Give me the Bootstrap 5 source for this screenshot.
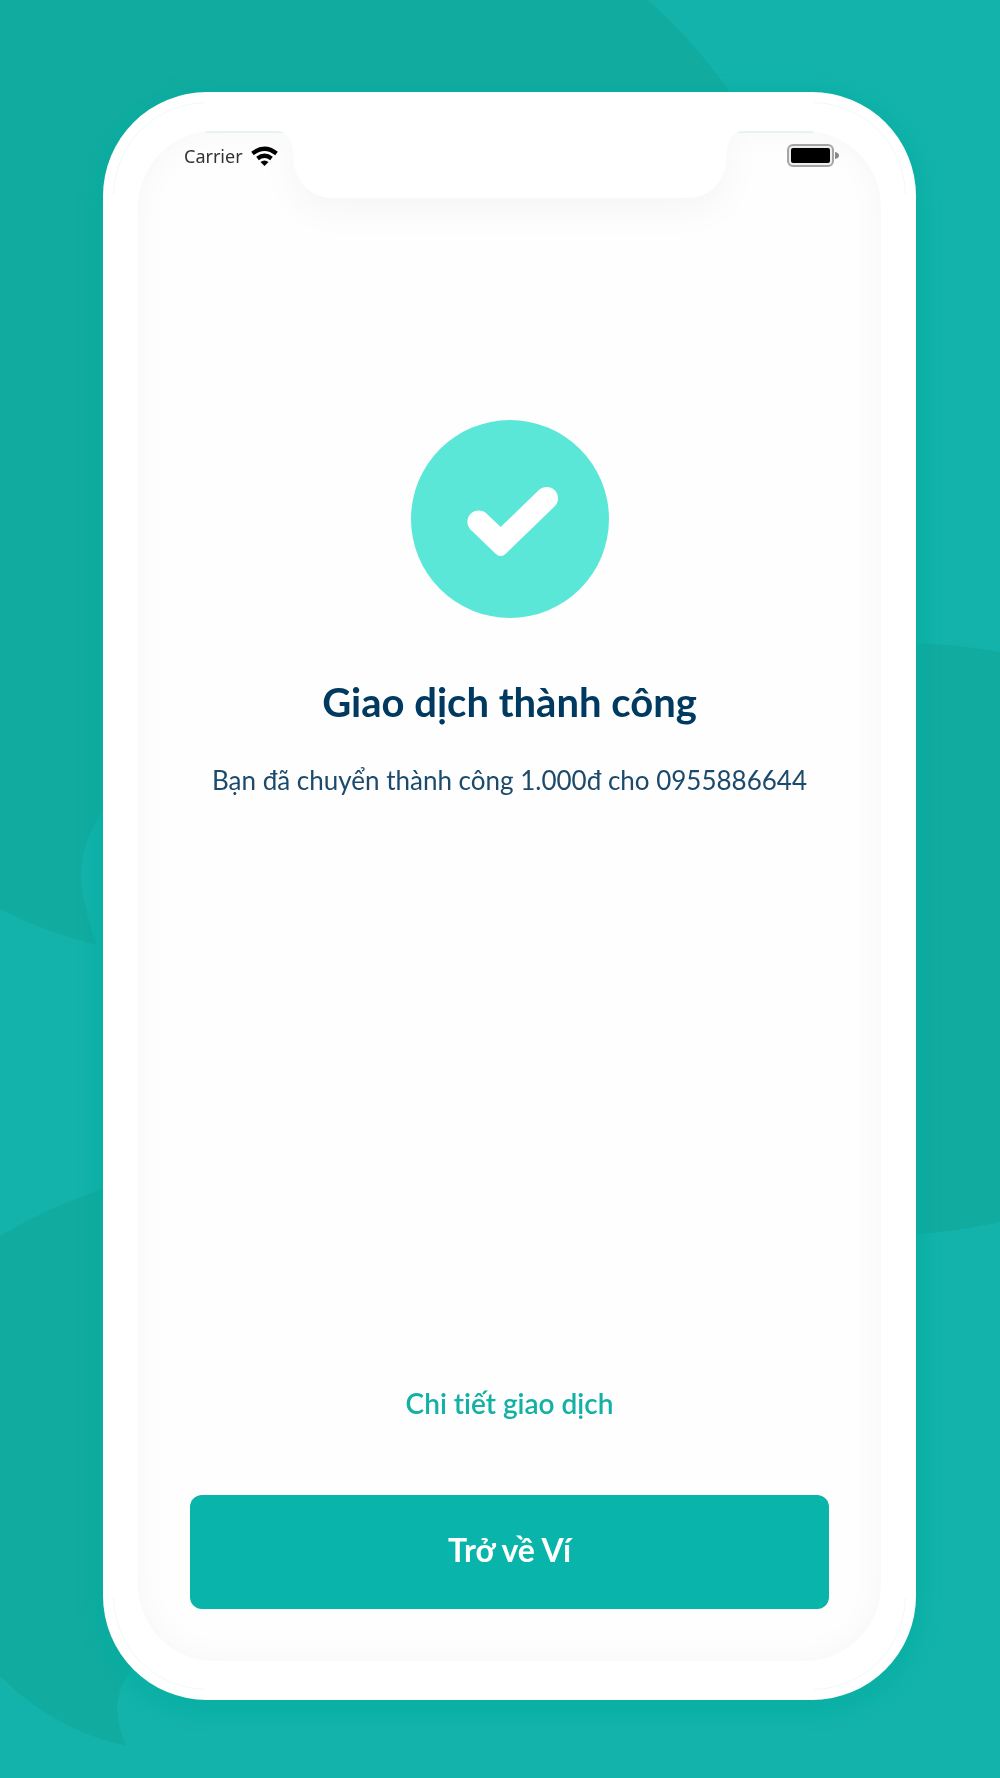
<!DOCTYPE html>
<html lang="vi">
<head>
<meta charset="utf-8">
<meta name="viewport" content="width=device-width, initial-scale=1">
<title>Giao dịch thành công</title>
<link href="https://cdn.jsdelivr.net/npm/bootstrap@5.3.0/dist/css/bootstrap.min.css" rel="stylesheet">
<style>
  body {
    font-family: Lato, "Noto Sans", sans-serif;
    font-variant-ligatures: none;
    background: #13b3ab;
    padding: 92px 84px 78px 103px;
    color: #003a60;
  }
  .backdrop { z-index: -1; }
  .phone {
    min-height: calc(100vh - 170px);
    padding: 39px 35px 39px;
    border-radius: 104px;
    box-shadow: 0 6px 14px 12px rgba(0, 172, 158, .4);
  }
  /* faint highlight arcs on the four corners of the case */
  .phone::before {
    content: "";
    position: absolute;
    inset: 10px;
    border: 1px solid #eef7f5;
    border-radius: 94px;
    pointer-events: none;
    --m: linear-gradient(#000 0 0);
    -webkit-mask: var(--m) 0 0/92px 92px no-repeat, var(--m) 100% 0/92px 92px no-repeat, var(--m) 0 100%/92px 92px no-repeat, var(--m) 100% 100%/92px 92px no-repeat;
  }
  .screen {
    border-radius: 76px;
    background: #fefefe;
    box-shadow: inset 0 0 34px rgba(0, 0, 0, .035);
    overflow: hidden;
  }
  .screen-edge { height: 2px; margin: 0 68px; background: #e6f3f0; }
  .notch { filter: drop-shadow(0 12px 16px rgba(0, 0, 0, .035)); }
  .status { padding: 9px 42px 0 46px; font: 18px/28px "Noto Sans", sans-serif; color: #333; }
  .result { padding: 250px 16px 0; }
  .result-title { font-size: 40px; line-height: 48px; margin: 60px 0 0; }
  .result-note { font-size: 26px; line-height: 36px; margin: 36px 0 0; color: #1c4a6c; }
  .actions { padding: 48px 52px 52px; }
  .details { font-size: 28px; line-height: 36px; color: #13b0a5; margin-bottom: 74px; }
  .btn-wallet {
    --bs-btn-bg: #09b4aa; --bs-btn-color: #fff;
    --bs-btn-hover-bg: #08a59c; --bs-btn-hover-color: #fff;
    --bs-btn-border-width: 0;
    font-size: 32px; line-height: 40px; padding: 35px 16px 39px; border-radius: 12px;
  }
</style>
</head>
<body class="min-vh-100">
<svg class="backdrop position-fixed top-0 start-0 w-100 h-100" viewBox="0 0 1000 1778" preserveAspectRatio="xMidYMid slice" aria-hidden="true">
  <g fill="#12aba0">
    <path d="M0 0H648Q699 46 735 100V500L140 770Q82 820 81 874Q82 904 97 945Q44 932 0 909Z"/>
    <path d="M0 1236Q50 1206 103 1189H300V1600L133 1667Q117 1688 117 1709Q118 1728 126 1746Q54 1730 0 1676Z"/>
    <path d="M900 643Q950 643 1000 652V1222Q960 1231 900 1236Z"/>
  </g>
</svg>

<main class="phone position-relative bg-white d-flex flex-column">
  <section class="screen position-relative flex-grow-1 d-flex flex-column">
    <div class="screen-edge"></div>
    <svg class="notch position-absolute top-0 start-50 translate-middle-x" width="467" height="68" viewBox="0 0 467 68" aria-hidden="true">
      <path fill="#fff" d="M0 0C12 0 17 12 17 25C17 50 33 67 57 67H410C434 67 450 50 450 25C450 12 455 0 467 0Z"/>
    </svg>

    <header class="status d-flex justify-content-between align-items-center">
      <div class="d-flex align-items-center gap-2">
        <span>Carrier</span>
        <svg width="27" height="20" viewBox="0 0 27 20" role="img" aria-label="Wi-Fi">
          <g fill="none" stroke="#000" stroke-width="4.2">
            <path d="M1.500 7.500Q13.500-2 25.500 7.500"/>
            <path d="M6.500 12.500Q13.500 7 20.500 12.500"/>
          </g>
          <path d="M9.500 16Q13.500 13 17.500 16L13.500 20Z"/>
        </svg>
      </div>
      <svg width="52" height="24" viewBox="0 0 52 24" role="img" aria-label="Pin">
        <rect x="1" y="1" width="45" height="21" rx="5" fill="#eee" stroke="#a5a5a5" stroke-width="2"/>
        <rect x="4" y="4" width="39" height="15" rx="2"/>
        <path d="M48 8Q52 9 52 11.500T48 15Z" fill="#888"/>
      </svg>
    </header>

    <div class="result text-center">
      <svg width="198" height="198" viewBox="0 0 198 198" role="img" aria-label="Thành công">
        <circle cx="99" cy="99" r="99" fill="#5be7d8"/>
        <path fill="#fff" d="M59.700 109.700A11.300 11.300 0 0 1 75.700 93.700L89.700 107L127.700 70.300A11.300 11.300 0 0 1 143.700 86.300L95 133.500Q89.700 138.500 84.400 133.500Z"/>
      </svg>
      <h1 class="result-title fw-bold">Giao dịch thành công</h1>
      <p class="result-note">Bạn đã chuyển thành công 1.000đ cho 0955886644</p>
    </div>

    <div class="actions mt-auto text-center">
      <a class="details fw-semibold d-inline-block text-decoration-none" href="#">Chi tiết giao dịch</a>
      <button type="button" class="btn btn-wallet fw-bold w-100 d-block">Trở về Ví</button>
    </div>
  </section>
</main>
<script src="https://cdn.jsdelivr.net/npm/bootstrap@5.3.0/dist/js/bootstrap.bundle.min.js"></script>
</body>
</html>
